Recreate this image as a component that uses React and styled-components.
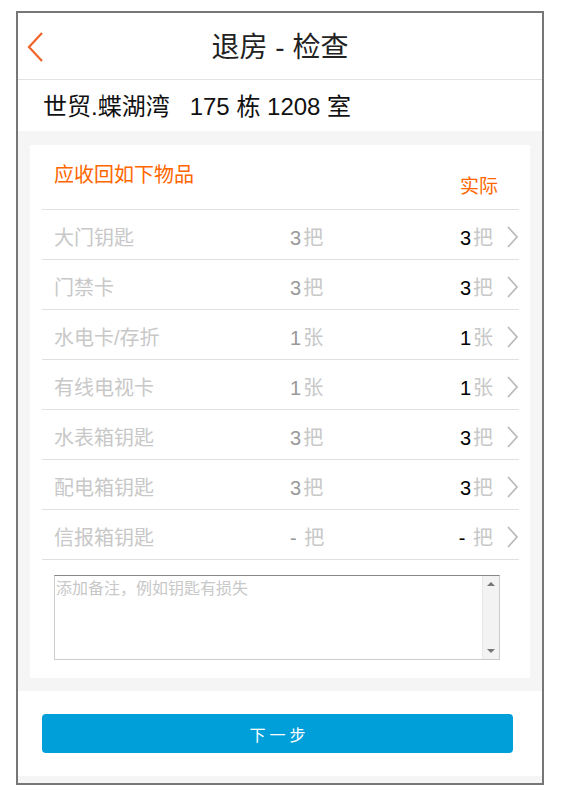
import React from "react";
import styled, { createGlobalStyle } from "styled-components";

const GlobalStyle = createGlobalStyle`
  html, body {
    margin: 0;
    padding: 0;
    background: #fff;
    font-family: "Liberation Sans", "Noto Sans CJK SC", sans-serif;
  }
`;

const items = [
  { name: "大门钥匙", expect: "3", unit: "把", actual: "3" },
  { name: "门禁卡", expect: "3", unit: "把", actual: "3" },
  { name: "水电卡/存折", expect: "1", unit: "张", actual: "1" },
  { name: "有线电视卡", expect: "1", unit: "张", actual: "1" },
  { name: "水表箱钥匙", expect: "3", unit: "把", actual: "3" },
  { name: "配电箱钥匙", expect: "3", unit: "把", actual: "3" },
  { name: "信报箱钥匙", expect: "- ", unit: "把", actual: "- " },
];

const Frame = styled.div`
  box-sizing: border-box;
  margin: 11px 0 0 16px;
  width: 528px;
  height: 774px;
  border: 2px solid #777;
  display: flex;
  flex-direction: column;
  background: #f5f5f5;
`;

const Header = styled.header`
  height: 66px;
  display: flex;
  align-items: center;
  justify-content: center;
  position: relative;
  background: #fff;
  border-bottom: 1px solid #e3e3e3;
`;

const BackButton = styled.button`
  position: absolute;
  left: 8px;
  top: 18px;
  width: 20px;
  height: 32px;
  padding: 0;
  border: none;
  background: none;
  display: flex;
`;

const Title = styled.h1`
  margin: 0 0 2px;
  font-size: 28px;
  font-weight: normal;
  color: #222;
`;

const Address = styled.div`
  height: 51px;
  display: flex;
  align-items: center;
  padding: 0 0 3px 25px;
  box-sizing: border-box;
  background: #fff;
  font-size: 24px;
  color: #111;
  white-space: pre;
`;

const Section = styled.section`
  padding: 14px 12px 13px;
`;

const Card = styled.div`
  background: #fff;
  padding: 0 11px 18px 12px;
`;

const CardHead = styled.div`
  height: 64px;
  display: flex;
  justify-content: space-between;
  border-bottom: 1px solid #e0e0e0;
`;

const CardTitle = styled.h2`
  margin: 18px 0 0 12px;
  font-size: 20px;
  font-weight: normal;
  color: #ff6600;
  line-height: 24px;
`;

const ActualLabel = styled.span`
  margin: 31px 21px 0 0;
  font-size: 19px;
  color: #ff6600;
  line-height: 22px;
`;

const Row = styled.div`
  box-sizing: border-box;
  height: 50px;
  padding: 3px 0 0 12px;
  display: grid;
  grid-template-columns: 236px 1fr auto 26px;
  align-items: center;
  border-bottom: 1px solid #e0e0e0;
  font-size: 20px;
  white-space: pre;
`;

const Label = styled.span`
  color: #c8c8c8;
`;

const Qty = styled.span`
  color: ${(p) => (p.$dark ? "#000" : "#999")};
  em {
    font-style: normal;
    color: #c8c8c8;
    margin-left: 2px;
  }
`;

const Chevron = styled.svg`
  justify-self: end;
  width: 13px;
  height: 22px;
  margin-top: 2px;
`;

const NoteBox = styled.div`
  display: flex;
  box-sizing: border-box;
  margin: 15px 0 0 12px;
  width: 446px;
  height: 85px;
  border: 1px solid #ccc;
  border-top-color: #888;
`;

const Note = styled.textarea`
  flex: 1;
  resize: none;
  border: none;
  outline: none;
  padding: 1px 1px;
  font-family: "Noto Sans CJK SC", sans-serif;
  font-size: 16px;
  line-height: 20px;
  &::placeholder {
    color: #c8c8c8;
  }
`;

const ScrollTrack = styled.div`
  width: 16px;
  background: #f3f3f3;
  border-left: 1px solid #e8e8e8;
  display: flex;
  flex-direction: column;
  justify-content: space-between;
  align-items: center;
  padding: 6px 0;
`;

const Arrow = styled.span`
  width: 0;
  height: 0;
  border-left: 4px solid transparent;
  border-right: 4px solid transparent;
  ${(p) => (p.$down ? "border-top: 4px solid #777;" : "border-bottom: 4px solid #777;")}
`;

const Footer = styled.div`
  height: 85px;
  background: #fff;
  display: flex;
  align-items: center;
  padding: 0 29px 0 24px;
`;

const NextButton = styled.button`
  flex: 1;
  height: 39px;
  border: none;
  border-radius: 4px;
  background: #009fda;
  color: #fff;
  font-family: "Noto Sans CJK SC", sans-serif;
  font-size: 16px;
  letter-spacing: 4px;
  text-indent: 4px;
`;

export default function App() {
  return (
    <>
      <GlobalStyle />
      <Frame>
        <Header>
          <BackButton aria-label="back">
            <svg width="20" height="32" viewBox="0 0 20 32">
              <polyline points="16,2 3,16 16,30" fill="none" stroke="#f0642a" strokeWidth="2.2" />
            </svg>
          </BackButton>
          <Title>退房 - 检查</Title>
        </Header>
        <Address>{"世贸.蝶湖湾   175 栋 1208 室"}</Address>
        <Section>
          <Card>
            <CardHead>
              <CardTitle>应收回如下物品</CardTitle>
              <ActualLabel>实际</ActualLabel>
            </CardHead>
            {items.map((it) => (
              <Row key={it.name}>
                <Label>{it.name}</Label>
                <Qty>
                  {it.expect}
                  <em>{it.unit}</em>
                </Qty>
                <Qty $dark>
                  {it.actual}
                  <em>{it.unit}</em>
                </Qty>
                <Chevron viewBox="0 0 13 22">
                  <polyline points="2,1 11,11 2,21" fill="none" stroke="#bbb" strokeWidth="1.8" />
                </Chevron>
              </Row>
            ))}
            <NoteBox>
              <Note placeholder="添加备注，例如钥匙有损失" />
              <ScrollTrack>
                <Arrow />
                <Arrow $down />
              </ScrollTrack>
            </NoteBox>
          </Card>
        </Section>
        <Footer>
          <NextButton>下一步</NextButton>
        </Footer>
      </Frame>
    </>
  );
}
